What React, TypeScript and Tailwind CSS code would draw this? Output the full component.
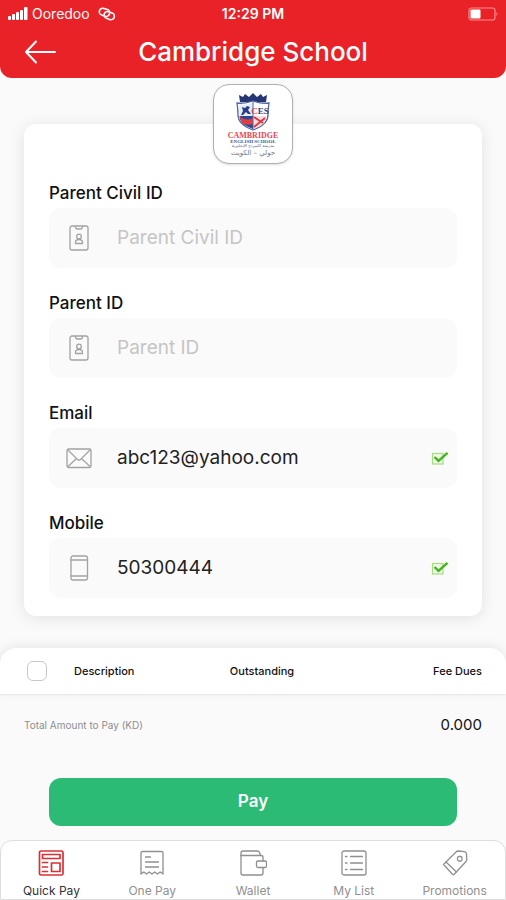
import type { ReactNode } from "react";

const FIELDS = [
  { id: "civil-id", label: "Parent Civil ID", icon: <IdIcon /> },
  { id: "parent-id", label: "Parent ID", icon: <IdIcon /> },
  { id: "email", label: "Email", value: "abc123@yahoo.com", icon: <MailIcon /> },
  { id: "mobile", label: "Mobile", value: "50300444", icon: <PhoneIcon /> },
];

const TABS = [
  { label: "Quick Pay", icon: <QuickPayIcon />, active: true },
  { label: "One Pay", icon: <ReceiptIcon /> },
  { label: "Wallet", icon: <WalletIcon /> },
  { label: "My List", icon: <ListIcon /> },
  { label: "Promotions", icon: <TagIcon /> },
];

function Icon({ children }: { children: ReactNode }) {
  return (
    <svg
      width="28"
      height="28"
      viewBox="0 0 28 28"
      fill="none"
      stroke="currentColor"
      strokeWidth="1.3"
      strokeLinecap="round"
      strokeLinejoin="round"
      aria-hidden="true"
    >
      {children}
    </svg>
  );
}

function IdIcon() {
  return (
    <Icon>
      <rect x="5" y="2" width="18" height="24" rx="2" />
      <path d="M10.500 2.500c0 2 1 2.500 2 2.500h3c1 0 2-.5 2-2.500" />
      <circle cx="14" cy="12.500" r="2.300" />
      <path d="M10.500 19.500v-1c0-1.700 1.500-3 3.500-3s3.500 1.300 3.500 3v1z" />
    </Icon>
  );
}

function MailIcon() {
  return (
    <Icon>
      <rect x="2" y="5" width="24" height="18.500" rx="1.500" />
      <path d="M3 6l9.500 9.500q1.500 1.300 3 0L25 6M3 22.500l8-7.500M25 22.500L17 15" />
    </Icon>
  );
}

function PhoneIcon() {
  return (
    <Icon>
      <rect x="6" y="2" width="16.500" height="24" rx="2" />
      <path d="M6 6h16.500M6 22h16.500" />
    </Icon>
  );
}

function QuickPayIcon() {
  return (
    <Icon>
      <g strokeWidth="1.700">
        <rect x="2.500" y="2" width="23.500" height="24" rx="1.500" />
        <path d="M5.500 5.500h17.500v4h-17.500z" />
        <path d="M14.500 14h8.500v8.500h-8.500z" />
        <path d="M5.500 13.500h5M5.500 18h5M5.500 22.500h5" />
      </g>
    </Icon>
  );
}

function ReceiptIcon() {
  return (
    <Icon>
      <path d="M3 25V4q0-1.500 1.500-1.500h19Q25 2.500 25 4v21l-2.800-2-2.700 2-2.800-2-2.700 2-2.800-2-2.700 2-2.700-2z" />
      <path d="M7.500 8h5M7.500 13h13M7.500 18h13" />
    </Icon>
  );
}

function WalletIcon() {
  return (
    <Icon>
      <path d="M24 12V8.500q0-2-2-2H2V24q0 2 2 2H22q2 0 2-2v-5.500" />
      <path d="M2 6.500V4q0-2 2-2h14.500q1.500 0 2 1.500l1 3" />
      <rect x="17.500" y="12" width="10" height="6.500" rx="1.500" />
    </Icon>
  );
}

function ListIcon() {
  return (
    <Icon>
      <rect x="2" y="2" width="24" height="24" rx="2" />
      <path d="M10.500 7.500h12M10.500 14h12M10.500 20.500h12" />
      <path d="M5.500 7.500h1.500M5.500 14h1.500M5.500 20.500h1.500" />
    </Icon>
  );
}

function TagIcon() {
  return (
    <Icon>
      <path d="M2.500 15.500L15 3q1-1 2.300-1l6.200.7q1.800.2 2 2l.3 5.500q0 1.500-1 2.500L13 25.500q-.6.6-1.200 0z" />
      <path d="M5 13l10.500 10" />
      <rect x="16.500" y="7.500" width="4.500" height="4.500" rx="1.500" />
    </Icon>
  );
}

function ValidMark() {
  return (
    <svg width="18" height="16" viewBox="0 0 18 16" fill="none" aria-hidden="true">
      <rect x="1.500" y="3.500" width="10.500" height="10.500" fill="#f0f9e8" stroke="#a4dc80" strokeWidth="1.200" />
      <path d="M3.500 7l4 3.800L16.500 2.800" stroke="#43b41c" strokeWidth="2.400" />
    </svg>
  );
}

function SchoolCrest() {
  return (
    <svg width="56" height="70" viewBox="0 0 56 70" role="img" aria-label="Cambridge English School">
      <path d="M14 4l4 2 2-3 4 3 4-4 4 4 4-3 2 3 4-2-1 7H15z" fill="#263673" />
      <path d="M12 12q7 1 16-2 9 3 16 2-1 7-1 12c0 8-7 12-15 15-8-3-15-7-15-15q0-5-1-12z" fill="#fff" stroke="#52669f" strokeWidth="1.300" />
      <path d="M14 13.500q7 .5 14-1.500v13H14.500z" fill="#e6edf8" />
      <path d="M17 16l3 1 2-2 3 1-2 3 3 4h-3l-2-2-3 3h-2l2-4z" fill="#263e86" />
      <path d="M14.500 25H28v13C20 35 14.500 31 14.500 25z" fill="#294994" />
      <path d="M14.500 25q6 6 13.500 2v6q-7 2-11-1z" fill="#e43c42" />
      <path d="M28 25h13.500c0 7-6 11-13.500 13z" fill="#f8dfe2" />
      <path d="M29 26l9 6M40 27L29 36" stroke="#e13843" strokeWidth="2" />
      <path d="M28 11v27" stroke="#52669f" />
      <text x="35" y="23" fontSize="9" fontWeight="700" textAnchor="middle" fill="#e13843" fontFamily="'Liberation Sans Narrow', 'Liberation Serif', serif">
        C<tspan fill="#2b4385">ES</tspan>
      </text>
      <text x="28" y="47" fontSize="8" fontWeight="700" textAnchor="middle" fill="#e54a4d" fontFamily="'Liberation Serif', serif">
        CAMBRIDGE
      </text>
      <text x="28" y="52" fontSize="5" fontWeight="700" textAnchor="middle" fill="#45558d" fontFamily="'Liberation Serif', serif">
        ENGLISH SCHOOL
      </text>
      <text x="28" y="56" fontSize="4" textAnchor="middle" fill="#45558d" fontFamily="'DejaVu Sans', sans-serif">
        مدرسة كامبردج الإنجليزية
      </text>
      <text x="28" y="64" fontSize="7" textAnchor="middle" fill="#737990" direction="rtl" fontFamily="'DejaVu Sans', sans-serif">
        حولي – الكويت
      </text>
    </svg>
  );
}

function StatusBar() {
  return (
    <div className="grid h-7 grid-cols-3 items-center px-2 text-sm">
      <div className="flex items-center gap-1">
        <svg width="20" height="14" viewBox="0 0 20 14" fill="currentColor" aria-hidden="true">
          <rect x="0" y="9" width="3" height="4" rx="1" />
          <rect x="4" y="7" width="3" height="6" rx="1" />
          <rect x="8" y="5" width="3" height="8" rx="1" />
          <rect x="12" y="3" width="3" height="10" rx="1" />
          <rect x="16" y="0" width="3.500" height="13" rx="1" />
        </svg>
        <span>Ooredoo</span>
        <svg className="ml-1" width="18" height="14" viewBox="0 0 18 14" fill="none" stroke="currentColor" strokeWidth="1.600" aria-hidden="true">
          <rect x="1.200" y="2" width="10.500" height="7" rx="3.500" transform="rotate(20 7 5.500)" />
          <rect x="6" y="5" width="10.500" height="7" rx="3.500" transform="rotate(20 11 8.500)" />
        </svg>
      </div>
      <span className="text-center font-semibold">12:29 PM</span>
      <svg className="justify-self-end" width="30" height="14" viewBox="0 0 30 14" fill="none" aria-hidden="true">
        <rect x="1" y="1" width="26" height="12" rx="2.500" stroke="#f98d91" strokeWidth="1.200" />
        <rect x="2.500" y="2.500" width="10" height="9" rx="1" fill="#fff" />
        <path d="M28.500 5q2 2 0 4z" fill="#f98d91" />
      </svg>
    </div>
  );
}

export default function App() {
  return (
    <div className="flex min-h-screen flex-col bg-[#fafafa] font-['Inter','Liberation_Sans',sans-serif] text-[#111]">
      <header className="rounded-b-xl bg-[#e92227] text-white">
        <StatusBar />
        <div className="grid h-[50px] grid-cols-[60px_1fr_60px] items-start pt-2">
          <button type="button" aria-label="Back" className="flex h-8 items-center pl-6">
            <svg width="34" height="24" viewBox="0 0 34 24" fill="none" stroke="currentColor" strokeWidth="2" strokeLinecap="round" strokeLinejoin="round" aria-hidden="true">
              <path d="M31 12H2M12 1.500L2 12l10 10.500" />
            </svg>
          </button>
          <h1 className="text-center text-[26px] leading-8 font-medium">Cambridge School</h1>
        </div>
      </header>

      <main>
        <form className="mx-6 mt-[46px] rounded-xl bg-white px-[25px] pb-[18px] shadow-[0_2px_16px_rgba(0,0,0,0.1)]">
          <div className="flex justify-center">
            <div className="-mt-10 flex h-20 w-20 items-start justify-center rounded-2xl border border-[#b0b0b0] bg-white pt-1.5 shadow-sm">
              <SchoolCrest />
            </div>
          </div>
          <div className="mt-[17px] flex flex-col gap-[23px]">
            {FIELDS.map((field) => (
              <div key={field.id}>
                <label htmlFor={field.id} className="block text-[17px] leading-6 font-medium">
                  {field.label}
                </label>
                <div className="mt-[3px] flex h-[60px] items-center rounded-xl bg-[#fafafa] pr-2 pl-4 text-[#a3a3a3]">
                  {field.icon}
                  <input
                    id={field.id}
                    type="text"
                    placeholder={field.label}
                    defaultValue={field.value}
                    className="ml-6 min-w-0 flex-1 bg-transparent text-[19px] text-[#222] outline-none placeholder:text-[#c5c5c5]"
                  />
                  {field.value && <ValidMark />}
                </div>
              </div>
            ))}
          </div>
        </form>

        <table className="mt-8 w-full rounded-t-2xl bg-white text-[11px] shadow-[0_-2px_12px_rgba(0,0,0,0.08),0_1px_2px_rgba(0,0,0,0.06)]">
          <thead>
            <tr className="h-[46px]">
              <th className="w-[74px] pl-[27px] text-left">
                <input
                  type="checkbox"
                  aria-label="Select all"
                  className="block h-5 w-5 appearance-none rounded-md border border-[#c8c8c8] bg-white"
                />
              </th>
              <th className="w-[100px] text-left font-medium">Description</th>
              <th className="text-center font-medium">Outstanding</th>
              <th className="w-[156px] pr-6 text-right font-medium">Fee Dues</th>
            </tr>
          </thead>
        </table>

        <div className="flex h-[62px] items-center justify-between px-6">
          <span className="text-[10px] text-[#8e8e8e]">Total Amount to Pay (KD)</span>
          <span className="text-[15px]">0.000</span>
        </div>

        <div className="px-[49px] pt-[22px]">
          <button type="button" className="h-12 w-full rounded-xl bg-[#2bbb75] text-[17px] font-semibold text-white">
            Pay
          </button>
        </div>
      </main>

      <nav className="mt-auto grid h-[60px] grid-cols-5 rounded-t-xl border border-[#dedede] bg-white text-xs">
        {TABS.map((tab) => (
          <a
            key={tab.label}
            href="#"
            className={`flex flex-col items-center gap-1.5 pt-2 ${tab.active ? "text-[#dc3034]" : "text-[#8f8f8f]"}`}
          >
            {tab.icon}
            <span className={tab.active ? "text-[#333]" : ""}>{tab.label}</span>
          </a>
        ))}
      </nav>
    </div>
  );
}
